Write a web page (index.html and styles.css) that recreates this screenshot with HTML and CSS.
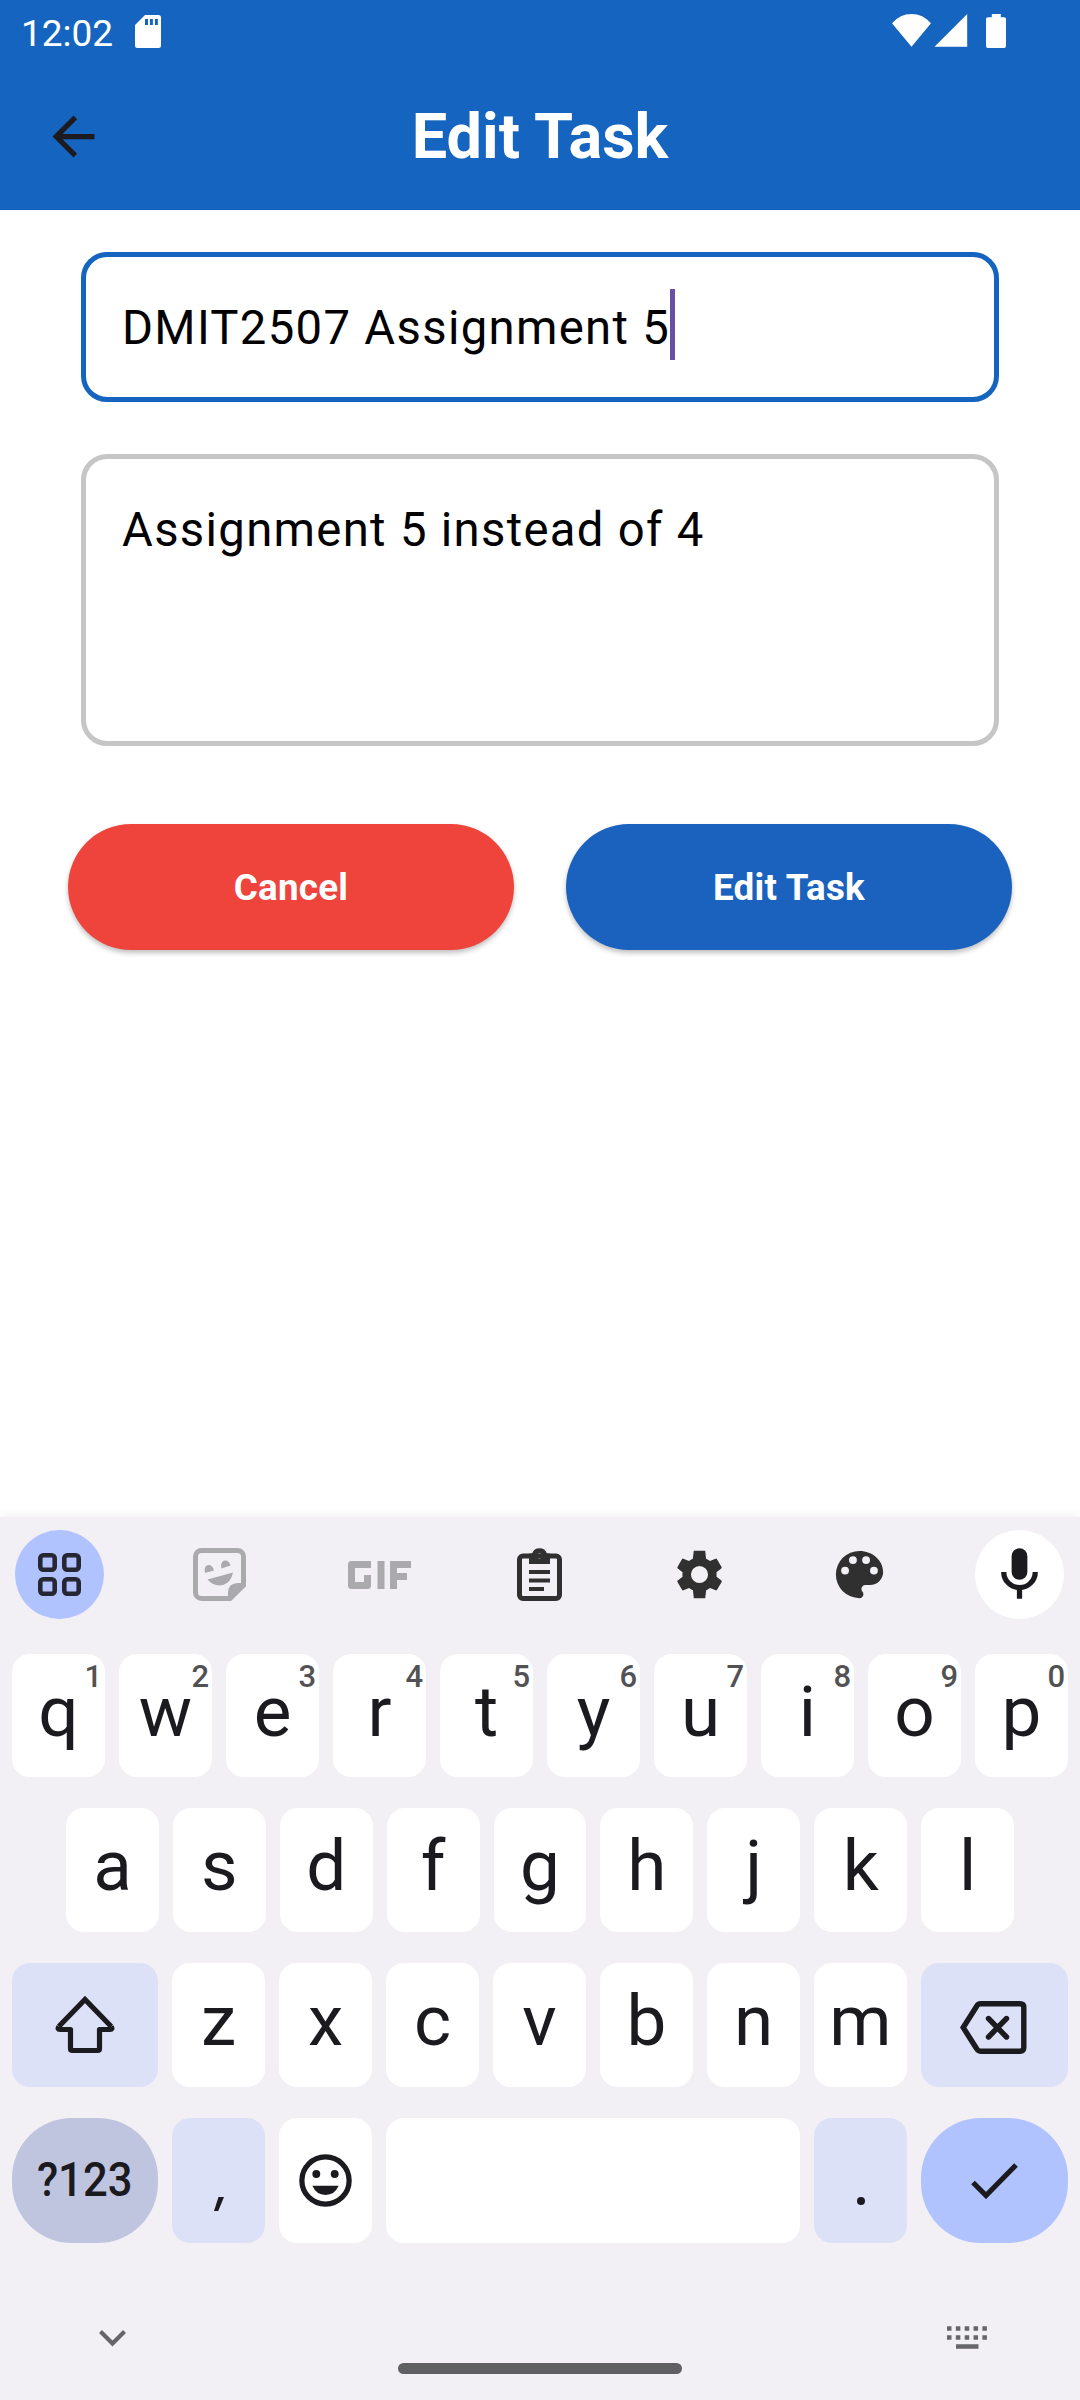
FILE: index.html
```html
<!DOCTYPE html>
<html lang="en">
<head>
<meta charset="utf-8">
<title>Edit Task</title>
<link rel="stylesheet" href="styles.css">
</head>
<body>
<div class="screen">
  <header class="app-bar">
    <div class="status">
      <span class="clock">12:02</span>
      <svg class="sd" width="26" height="33" viewBox="0 0 26 33"><path fill="#fff" fill-rule="evenodd" d="M10 0H23.500a2.500 2.500 0 0 1 2.500 2.500V30.500a2.500 2.500 0 0 1-2.500 2.500H2.500A2.500 2.500 0 0 1 0 30.500V10ZM10 4V10H13V4ZM14.900 4V10H17.900V4ZM19.900 4V10H22.900V4Z"/></svg>
      <svg class="signals" width="114" height="34" viewBox="0 0 114 34"><path fill="#fff" d="M0 9.300Q8 0 19.500 0T39 9.300L19.500 32.700ZM75.200 0V32.700H42.500ZM99.800 0H108.800V3.300H112a2 2 0 0 1 2 2V32a2 2 0 0 1-2 2H96a2 2 0 0 1-2-2V5.300a2 2 0 0 1 2-2H99.800Z"/></svg>
    </div>
    <div class="title-row">
      <svg class="back" width="63" height="63" viewBox="0 0 24 24"><path fill="#1d1b20" d="M20 11H7.830l5.590-5.590L12 4l-8 8 8 8 1.410-1.410L7.830 13H20v-2z"/></svg>
      <h1 class="title">Edit Task</h1>
    </div>
  </header>

  <main class="form">
    <div class="field focused"><span>DMIT2507 Assignment 5</span><i class="caret"></i></div>
    <div class="field notes"><span>Assignment 5 instead of 4</span></div>
    <div class="actions">
      <button class="btn cancel">Cancel</button>
      <button class="btn submit">Edit Task</button>
    </div>
  </main>

  <section class="keyboard">
    <div class="tools">
      <div class="tool blue"><svg width="43" height="43" viewBox="0 0 43 43" fill="none" stroke="#272733" stroke-width="4.600"><rect x="2.300" y="2.300" width="14.400" height="14.400" rx="3"/><rect x="26.300" y="2.300" width="14.400" height="14.400" rx="3"/><rect x="2.300" y="26.300" width="14.400" height="14.400" rx="3"/><rect x="26.300" y="26.300" width="14.400" height="14.400" rx="3"/></svg></div>
      <div class="tool"><svg width="53" height="53" viewBox="0 0 53 53"><path fill="none" stroke="#aaaaac" stroke-width="5" d="M36.500 50.500H8.500a6 6 0 0 1-6-6V8.500a6 6 0 0 1 6-6H44.500a6 6 0 0 1 6 6V37Z"/><path fill="#aaaaac" d="M53 35V38L38 53H35V45Q35 35 45 35ZM14.500 31.500L40 24.500Q38 34.500 30 37Q21 39 14.500 31.500ZM12 25Q10.500 18.500 15 17Q19.500 16.500 21 22.500ZM28.500 20.500Q27 14 31.500 12.500Q36 12 37.500 17.500Z"/></svg></div>
      <div class="tool"><svg width="63" height="28" viewBox="0 0 63 28" fill="none" stroke="#aaaaac" stroke-width="7"><path stroke-linejoin="round" d="M23 3.500H3.500V24.500H19.500V14"/><path d="M33 0V28M63 3.500H45.500V28M45.500 15.500H59"/></svg></div>
      <div class="tool"><svg width="45" height="53" viewBox="0 0 45 53"><rect x="2.500" y="8" width="40" height="42.500" rx="3.500" fill="none" stroke="#303030" stroke-width="5"/><path fill="#303030" fill-rule="evenodd" d="M12 5.500H15A8 8 0 0 1 30 5.500H33V16H12ZM22.500 5.300A2.700 2.700 0 1 0 22.510 5.300ZM12 22H33V26H12ZM12 30.500H33V34.500H12ZM12 39H27V43H12Z"/></svg></div>
      <div class="tool"><svg width="57" height="57" viewBox="0 0 24 24"><path fill="#303030" d="M19.140 12.940c.040-.300.060-.610.060-.940s-.020-.640-.070-.940l2.030-1.580a.49.49 0 0 0 .12-.61l-1.920-3.320a.488.488 0 0 0-.59-.22l-2.390.96c-.5-.38-1.030-.7-1.620-.94L14.400 2h-4.800l-.4 3.350c-.59.240-1.130.570-1.620.940l-2.390-.96c-.22-.08-.47 0-.59.22L2.740 8.870c-.12.210-.08.470.12.610l2.030 1.580c-.05.300-.09.630-.09.940s.020.640.070.940l-2.030 1.580a.49.49 0 0 0-.12.610l1.920 3.320c.12.220.37.290.59.220l2.390-.96c.5.380 1.030.7 1.620.940L9.600 22h4.800l.4-3.350c.59-.24 1.130-.56 1.620-.94l2.390.96c.22.080.47 0 .59-.22l1.920-3.320c.12-.22.070-.47-.12-.61l-2.010-1.580zM12 15.600A3.600 3.600 0 1 1 12 8.400a3.600 3.600 0 0 1 0 7.200z"/></svg></div>
      <div class="tool"><svg width="63" height="63" viewBox="0 0 24 24"><path fill="#303030" d="M12 3a9 9 0 0 0 0 18c.83 0 1.500-.67 1.500-1.500 0-.39-.15-.74-.39-1.010-.23-.26-.38-.61-.38-.99 0-.83.670-1.500 1.500-1.500H16c2.760 0 5-2.240 5-5 0-4.420-4.030-8-9-8zm-5.500 9a1.500 1.500 0 1 1 0-3 1.500 1.500 0 0 1 0 3zm3-4a1.500 1.500 0 1 1 0-3 1.500 1.500 0 0 1 0 3zm5 0a1.500 1.500 0 1 1 0-3 1.500 1.500 0 0 1 0 3zm3 4a1.500 1.500 0 1 1 0-3 1.500 1.500 0 0 1 0 3z"/></svg></div>
      <div class="tool white"><svg width="63" height="63" viewBox="0 0 24 24"><rect x="9" y="2" width="6" height="12" rx="3" fill="#1b1b1f"/><path fill="none" stroke="#1b1b1f" stroke-width="2" d="M6 11a6 6 0 0 0 12 0M12 17v4.200"/></svg></div>
    </div>

    <div class="row first">
      <div class="key">q<sup>1</sup></div><div class="key">w<sup>2</sup></div><div class="key">e<sup>3</sup></div><div class="key">r<sup>4</sup></div><div class="key">t<sup>5</sup></div><div class="key">y<sup>6</sup></div><div class="key">u<sup>7</sup></div><div class="key">i<sup>8</sup></div><div class="key">o<sup>9</sup></div><div class="key">p<sup>0</sup></div>
    </div>
    <div class="row second">
      <div class="key">a</div><div class="key">s</div><div class="key">d</div><div class="key">f</div><div class="key">g</div><div class="key">h</div><div class="key">j</div><div class="key">k</div><div class="key">l</div>
    </div>
    <div class="row third">
      <div class="key wide tint"><svg width="60" height="60" viewBox="0 0 60 60" fill="none" stroke="#1b1b1f" stroke-width="5.200" stroke-linejoin="round"><path stroke-linejoin="miter" d="M3.800 31.500L30 4.500L56.200 31.500"/><path d="M3.800 31.500Q2 34.500 5 34.500H15.500V53.500Q15.500 55.500 17.500 55.500H42.500Q44.500 55.500 44.500 53.500V34.500H55Q58 34.500 56.200 31.500"/></svg></div>
      <div class="key">z</div><div class="key">x</div><div class="key">c</div><div class="key">v</div><div class="key">b</div><div class="key">n</div><div class="key">m</div>
      <div class="key wide tint"><svg class="erase" width="67" height="53" viewBox="0 0 67 53" fill="none" stroke="#1b1b1f" stroke-width="5.400"><path d="M3.200 26.500L16.500 5.500Q18 2.800 20.500 2.800H60Q63.800 2.800 63.800 6.500V46.500Q63.800 50.200 60 50.200H20.500Q18 50.200 16.500 47.500Z"/><path stroke-linecap="round" d="M28.500 17.500L46.500 36M46.500 17.500L28.500 36"/></svg></div>
    </div>
    <div class="row fourth">
      <div class="key wide symbols"><span>?123</span></div>
      <div class="key tint"><svg width="10" height="14" viewBox="0 0 10 14" class="comma"><path fill="#1b1b1f" d="M4.500 0H10L4.200 14H0Z"/></svg></div>
      <div class="key"><svg width="63" height="63" viewBox="0 0 24 24"><circle cx="12" cy="12" r="9" fill="none" stroke="#1b1b1f" stroke-width="2"/><circle cx="8.500" cy="9.500" r="1.500" fill="#1b1b1f"/><circle cx="15.500" cy="9.500" r="1.500" fill="#1b1b1f"/><path fill="#1b1b1f" d="M7 14H17Q15.500 17.500 12 17.500T7 14Z"/></svg></div>
      <div class="key space"></div>
      <div class="key tint"><i class="dot"></i></div>
      <div class="key wide enter"><svg width="47" height="36" viewBox="0 0 47 36"><path fill="none" stroke="#1b1b1f" stroke-width="5.200" d="M2 19.500L15 32.500L45 2"/></svg></div>
    </div>

    <div class="nav">
      <svg class="collapse" width="27" height="17" viewBox="0 0 27 17"><path fill="none" stroke="#666668" stroke-width="4.200" d="M1.500 1.500L13.500 13.500L25.500 1.500"/></svg>
      <i class="handle"></i>
      <svg class="switcher" width="41" height="24" viewBox="0 0 41 24" fill="none" stroke="#666668" stroke-width="4.500"><path stroke-dasharray="4.500 4.350" d="M0 2.500H41M0 11.500H41"/><path d="M9 20.500H31.500"/></svg>
    </div>
  </section>
</div>
</body>
</html>
```
FILE: styles.css
```css
* { box-sizing: border-box; }
body { margin: 0; font-family: Roboto, "Liberation Sans", sans-serif; }
svg { display: block; flex: none; }
.screen { width: 1080px; height: 2400px; background: #fff; display: flex; flex-direction: column; overflow: hidden; }

.app-bar { height: 210px; background: #1565c0; color: #fff; }
.status { height: 63px; display: flex; align-items: flex-start; padding: 0 74px 0 21px; }
.clock { width: 114px; font-size: 37px; line-height: 67px; }
.sd { margin-top: 15px; }
.signals { margin: 14px 0 0 auto; }
.title-row { height: 147px; display: grid; grid-template-columns: 63px 1fr 63px; align-items: center; padding: 0 42px; }
.title { margin: 0; font-size: 63px; font-weight: 700; line-height: 147px; text-align: center; }

.form { flex: 1; padding-top: 42px; }
.field { width: 918px; margin: 0 auto; border: 5px solid #c6c6c6; border-radius: 26px; padding: 36px; font-size: 47.250px; line-height: 70px; letter-spacing: 1.310px; color: #000; white-space: nowrap; }
.focused { height: 150px; border-color: #1565c0; display: flex; align-items: flex-start; padding-top: 32px; }
.focused span { line-height: 78px; }
.caret { width: 5px; height: 71px; background: #6750a4; }
.notes { height: 292px; margin-top: 52px; }
.actions { display: flex; gap: 52px; padding: 78px 68px 0; }
.btn { flex: 1; height: 126px; border: 0; border-radius: 63px; color: #fff; font: 700 36.750px/126px Roboto, sans-serif; letter-spacing: .26px; box-shadow: 0 3px 5px rgba(0,0,0,.25); padding: 1px 0 0; }
.cancel { background: #ee443b; }
.submit { background: #1a62be; }

.keyboard { height: 883px; background: #f2f0f5; box-shadow: 0 0 10px rgba(0,0,0,.09); }
.tools { display: flex; justify-content: space-between; padding: 13px 16px 0 15px; height: 137px; }
.tool { width: 89px; height: 89px; border-radius: 50%; display: flex; align-items: center; justify-content: center; }
.blue { background: #b1c3ff; }
.white { background: #fff; }
.row { display: flex; gap: 14px; padding: 0 12px; height: 124px; margin-bottom: 31px; }
.first { height: 123px; }
.second { padding: 0 66px; }
.fourth { height: 125px; margin-bottom: 0; }
.key { flex: 1 1 0; min-width: 0; position: relative; background: #fff; border-radius: 18px; color: #1b1b1f; font-size: 71px; line-height: 115px; text-align: center; display: flex; justify-content: center; }
.key svg { align-self: center; }
.key sup { position: absolute; top: 7px; right: 3px; font-size: 31px; line-height: 32px; font-weight: 500; color: #525255; }
.wide { flex: 0 0 146px; }
.wide:last-child { flex-basis: 147px; }
.tint { background: #dde1f8; }
.symbols { background: #c0c5df; border-radius: 60px; font-size: 49px; font-weight: 500; line-height: 124px; }
.symbols span { transform: scaleX(.89); }
.enter { background: #b1c3ff; border-radius: 60px; }
.space { flex: 0 0 414px; }
.key .comma { align-self: flex-start; margin-top: 79px; }
.key .erase { margin: 4px 2px 0 0; }
.dot { width: 8px; height: 8px; border-radius: 50%; background: #1b1b1f; margin-top: 79px; }
.nav { height: 157px; display: grid; grid-template-columns: 299px 284px 1fr; padding: 83px 92px 0 99px; }
.collapse { margin-top: 4px; }
.handle { height: 11px; border-radius: 6px; background: #606063; margin-top: 37px; }
.switcher { justify-self: end; }
```
